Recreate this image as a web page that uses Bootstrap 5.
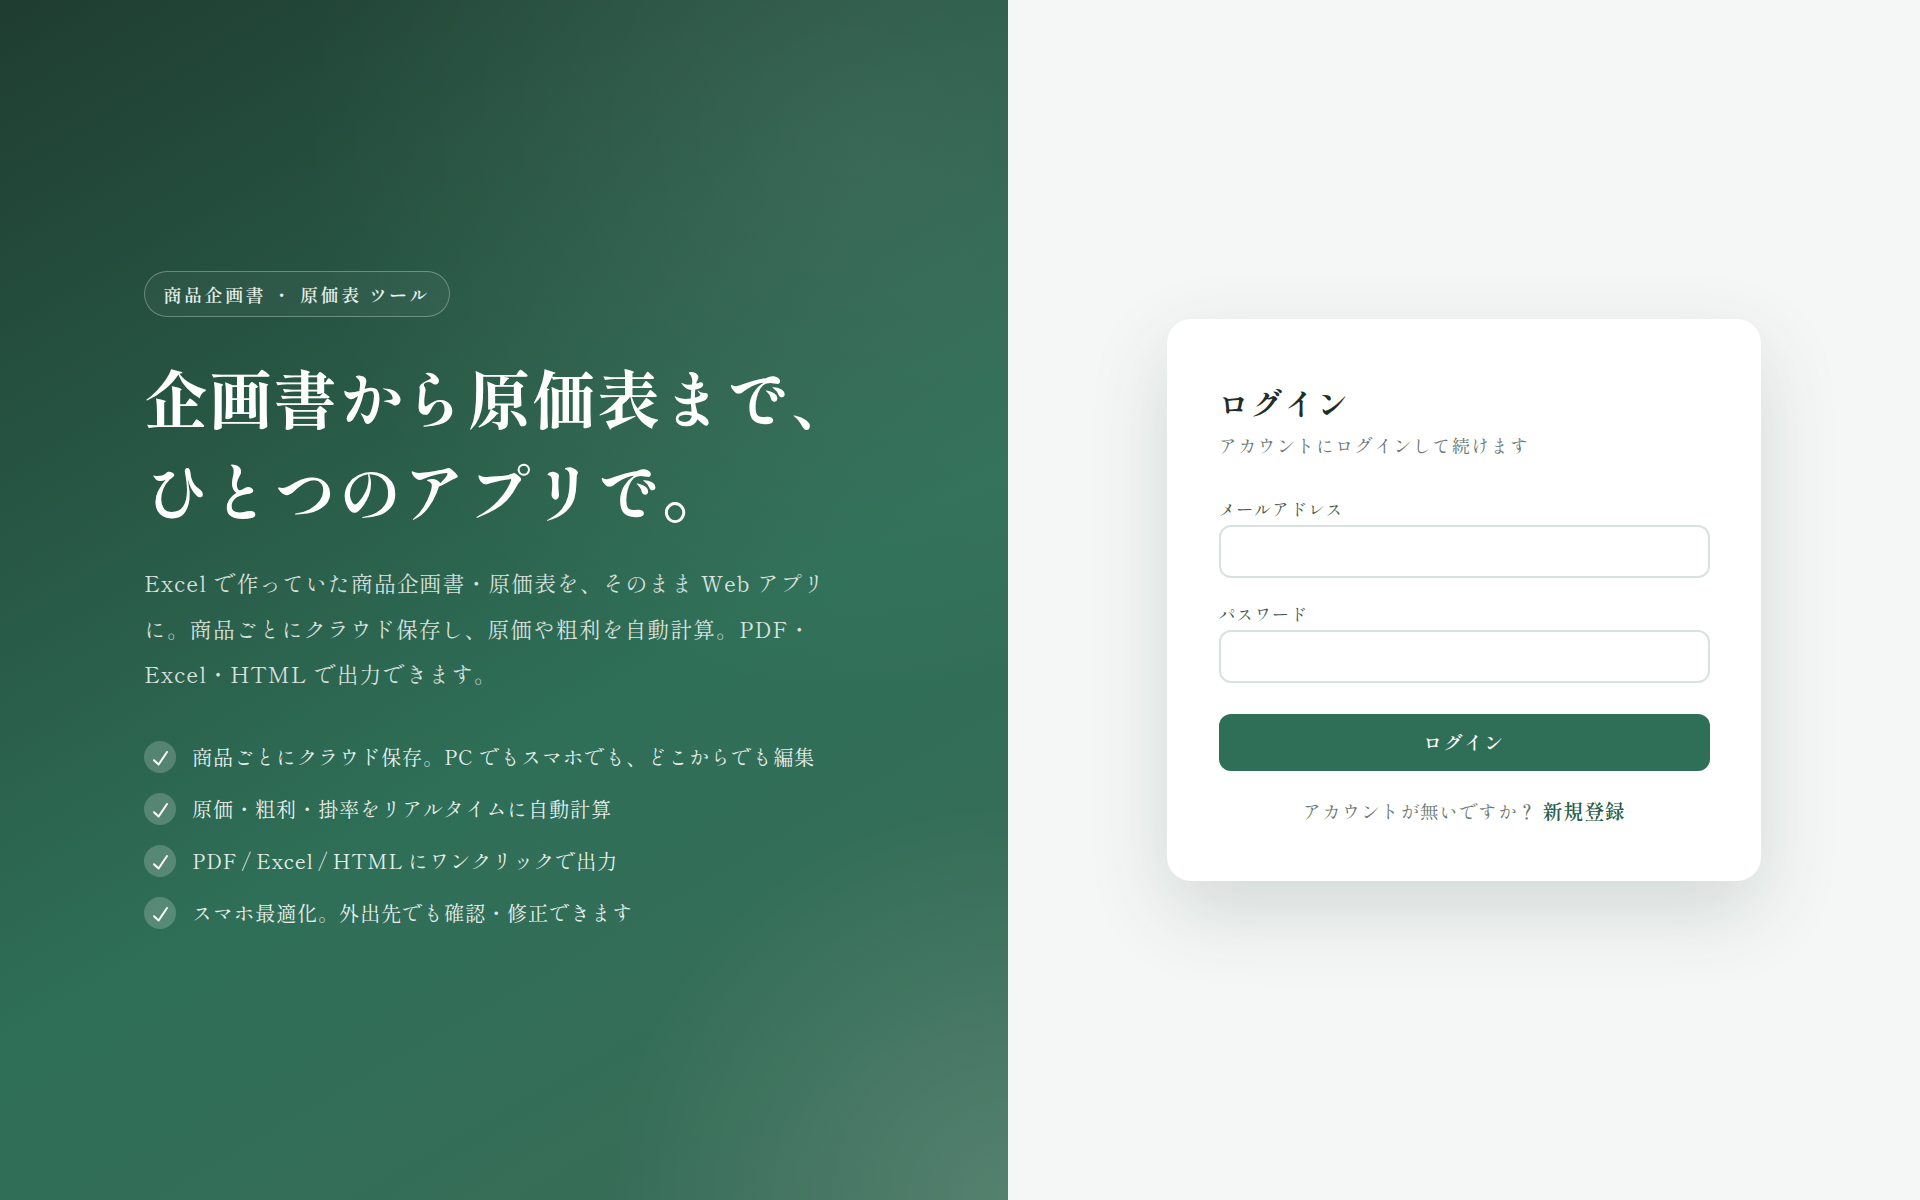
<!DOCTYPE html>
<html lang="ja">
<head>
<meta charset="utf-8">
<title>ログイン</title>
<link href="https://cdn.jsdelivr.net/npm/bootstrap@5.3.0/dist/css/bootstrap.min.css" rel="stylesheet">
<style>
body{font-family:"Shippori Mincho","Noto Serif CJK JP",serif;background:#f5f7f6;}
.shell{min-height:1200px;}
.hero{width:1008px;padding:0 144px;color:#fff;background:
 radial-gradient(circle 400px at 100% 100%,rgba(255,255,255,.14),rgba(255,255,255,0)),
 radial-gradient(circle 560px at 85% 12%,rgba(255,255,255,.08),rgba(255,255,255,0)),
 linear-gradient(150deg,#1f3d30 0%,#2f6f57 59%,#3a6c57 100%);}
.pill{height:46px;padding:0 18.5px;border:1px solid rgba(255,255,255,.3);border-radius:23px;background:rgba(255,255,255,.04);font-size:18px;letter-spacing:.137em;font-weight:600;color:#e6efe9;margin-bottom:33px;}
.headline{font-size:64px;line-height:93px;font-weight:700;letter-spacing:.01em;margin-bottom:24px;}
.lede{font-size:22px;line-height:45.4px;letter-spacing:.04em;color:rgba(255,255,255,.82);margin-bottom:44px;}
.feat{font-size:20.4px;letter-spacing:.03em;color:rgba(255,255,255,.9);gap:16px;height:32px;margin-bottom:20px;}
.feat-tight{word-spacing:-1.2px;}
.tick{width:32px;height:32px;border-radius:50%;background:rgba(255,255,255,.2);}
.tick svg{display:block;}
.side{flex:1;}
.panel{width:594px;border:0;border-radius:24px;padding:56px 51.5px 55px;box-shadow:0 30px 80px rgba(31,61,48,.16);}
.ptitle{font-size:31px;line-height:56px;font-weight:700;letter-spacing:.06em;color:#1f2e28;margin:0;}
.psub{font-size:18.5px;line-height:29px;letter-spacing:.05em;color:#6b7a74;margin-bottom:36px;}
.flabel{font-size:17px;line-height:26px;letter-spacing:.05em;color:#48574f;margin-bottom:3px;}
.finput{height:53px;border:2px solid #d9e1e2;border-radius:12px;}
.fgap{margin-bottom:23px;}
.go{height:57px;background:#2f6f57;border:0;border-radius:12px;color:#fff;font-size:19px;font-weight:600;letter-spacing:.07em;margin-top:31px;}
.foot{font-size:18.8px;line-height:30px;color:#6b7a74;letter-spacing:.04em;margin-top:25px;}
.foot a{color:#2a5c49;font-size:20px;font-weight:600;text-decoration:none;}
</style>
</head>
<body>
<div class="d-flex shell">
 <section class="hero d-flex flex-column justify-content-center align-items-start">
  <div class="pill d-inline-flex align-items-center">商品企画書 ・ 原価表 ツール</div>
  <h1 class="headline">企画書から原価表まで、<br>ひとつのアプリで。</h1>
  <p class="lede">Excel で作っていた商品企画書・原価表を、そのまま Web アプリに。商品ごとにクラウド保存し、原価や粗利を自動計算。PDF・Excel・HTML で出力できます。</p>
  <ul class="list-unstyled m-0">
   <li class="feat d-flex align-items-center"><span class="tick"><svg width="32" height="32" viewBox="0 0 32 32" fill="none" stroke="#fff" stroke-width="2" stroke-linecap="round" stroke-linejoin="round"><path d="M10 19.2 14.6 23.5 23 11"/></svg></span>商品ごとにクラウド保存。PC でもスマホでも、どこからでも編集</li>
   <li class="feat d-flex align-items-center"><span class="tick"><svg width="32" height="32" viewBox="0 0 32 32" fill="none" stroke="#fff" stroke-width="2" stroke-linecap="round" stroke-linejoin="round"><path d="M10 19.2 14.6 23.5 23 11"/></svg></span>原価・粗利・掛率をリアルタイムに自動計算</li>
   <li class="feat feat-tight d-flex align-items-center"><span class="tick"><svg width="32" height="32" viewBox="0 0 32 32" fill="none" stroke="#fff" stroke-width="2" stroke-linecap="round" stroke-linejoin="round"><path d="M10 19.2 14.6 23.5 23 11"/></svg></span>PDF / Excel / HTML にワンクリックで出力</li>
   <li class="feat d-flex align-items-center mb-0"><span class="tick"><svg width="32" height="32" viewBox="0 0 32 32" fill="none" stroke="#fff" stroke-width="2" stroke-linecap="round" stroke-linejoin="round"><path d="M10 19.2 14.6 23.5 23 11"/></svg></span>スマホ最適化。外出先でも確認・修正できます</li>
  </ul>
 </section>
 <main class="side d-flex align-items-center justify-content-center">
  <div class="card panel">
   <h2 class="ptitle">ログイン</h2>
   <p class="psub">アカウントにログインして続けます</p>
   <form>
    <div class="fgap"><label class="form-label flabel d-block">メールアドレス</label><input type="email" class="form-control finput"></div>
    <div><label class="form-label flabel d-block">パスワード</label><input type="password" class="form-control finput"></div>
    <button type="button" class="btn go w-100">ログイン</button>
   </form>
   <p class="foot text-center mb-0">アカウントが無いですか？ <a href="#">新規登録</a></p>
  </div>
 </main>
</div>
<script src="https://cdn.jsdelivr.net/npm/bootstrap@5.3.0/dist/js/bootstrap.bundle.min.js"></script>
</body>
</html>
